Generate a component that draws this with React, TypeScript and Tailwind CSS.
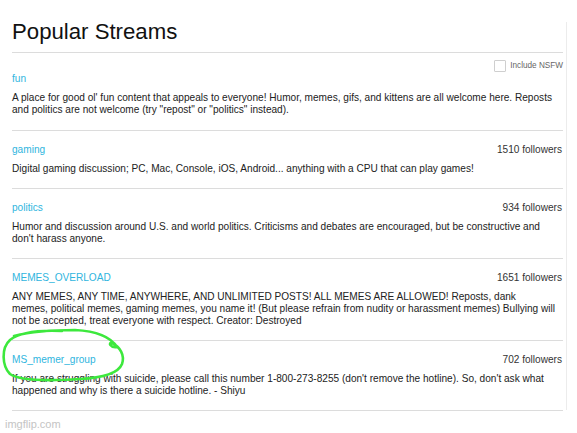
import React from "react";

type Stream = { name: string; followers?: string; lines: string[] };

const streams: Stream[] = [
  {
    name: "fun",
    lines: [
      "A place for good ol' fun content that appeals to everyone! Humor, memes, gifs, and kittens are all welcome here. Reposts",
      "and politics are not welcome (try \"repost\" or \"politics\" instead).",
    ],
  },
  {
    name: "gaming",
    followers: "1510 followers",
    lines: ["Digital gaming discussion; PC, Mac, Console, iOS, Android... anything with a CPU that can play games!"],
  },
  {
    name: "politics",
    followers: "934 followers",
    lines: [
      "Humor and discussion around U.S. and world politics. Criticisms and debates are encouraged, but be constructive and",
      "don't harass anyone.",
    ],
  },
  {
    name: "MEMES_OVERLOAD",
    followers: "1651 followers",
    lines: [
      "ANY MEMES, ANY TIME, ANYWHERE, AND UNLIMITED POSTS! ALL MEMES ARE ALLOWED! Reposts, dank",
      "memes, political memes, gaming memes, you name it! (But please refrain from nudity or harassment memes) Bullying will",
      "not be accepted, treat everyone with respect. Creator: Destroyed",
    ],
  },
  {
    name: "MS_memer_group",
    followers: "702 followers",
    lines: [
      "If you are struggling with suicide, please call this number 1-800-273-8255 (don't remove the hotline). So, don't ask what",
      "happened and why is there a suicide hotline. - Shiyu",
    ],
  },
];

export default function App() {
  return (
    <div
      className="relative w-[577px] h-[433px] bg-white overflow-hidden"
      style={{ fontFamily: '"Liberation Sans", Arial, sans-serif' }}
    >
      <div className="flex">
        <div className="ml-[12px] w-[551px] pt-[19px]">
          <div className="border-b border-[#dcdcdc] pb-[7px]">
            <h1 className="text-[22.2px] leading-[26px] text-[#111] font-normal">Popular Streams</h1>
          </div>
          <div className="mt-[7px] h-[12px] flex justify-end items-center gap-[4px]">
            <div className="w-[12px] h-[12px] border border-[#cfcfcf] rounded-[1px] bg-white" />
            <span className="text-[8.2px] leading-[12px] text-[#666]">Include NSFW</span>
          </div>
          {streams.map((s, i) => (
            <div
              key={s.name}
              className={
                i === 0
                  ? "border-b border-[#dcdcdc] pt-[1px] pb-[14px]"
                  : "border-b border-[#dcdcdc] pt-[13px] pb-[13px]"
              }
            >
              <div className="flex justify-between items-center h-[12px]">
                <span className="text-[10.1px] leading-[12px] text-[#2fb5de]">{s.name}</span>
                {s.followers && (
                  <span className="text-[10.1px] leading-[12px] text-[#333] pr-[1px]">{s.followers}</span>
                )}
              </div>
              <div className="mt-[7px] text-[10.1px] leading-[12px] text-[#222]">
                {s.lines.map((l) => (
                  <div key={l} className="whitespace-nowrap">
                    {l}
                  </div>
                ))}
              </div>
            </div>
          ))}
        </div>
        <div className="ml-[3px] mt-[22px] w-px h-[388px] bg-[#ececec]" />
      </div>

      <div className="absolute left-[5px] top-[417px] text-[11px] leading-[14px] text-[#c4c4c4]">
        imgflip.com
      </div>

      <svg
        className="absolute left-0 top-0 pointer-events-none"
        width="577"
        height="433"
        viewBox="0 0 577 433"
      >
        <path
          d="M 62 331 C 40 330, 20 332, 10 340 C 1 348, 2 366, 10 374 C 20 381, 50 381, 80 379 C 100 378, 118 374, 122 364 C 125 355, 120 347, 112 343 C 108 342, 110 348, 117 347 C 110 336, 95 331, 75 330 C 55 330, 30 332, 14 336"
          fill="none"
          stroke="#3de83d"
          strokeWidth="2.6"
          strokeLinecap="round"
          strokeLinejoin="round"
        />
      </svg>
    </div>
  );
}
